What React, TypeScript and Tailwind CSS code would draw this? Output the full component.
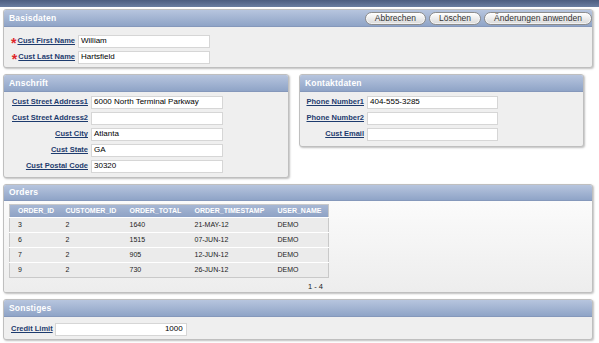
import type { ReactNode } from 'react';

type Field = { label: string; value: string; required?: boolean; align?: 'left' | 'right' };

const FONT = { fontFamily: '"Liberation Sans", Arial, sans-serif' };

function Region({ title, children, className = '', bodyClass = '', actions }: { title: string; children: ReactNode; className?: string; bodyClass?: string; actions?: ReactNode }) {
  return (
    <div className={`flex flex-col border border-[#bfbfbf] rounded-[3px] bg-[#efefef] shadow-[1px_1px_2px_rgba(0,0,0,0.25)] overflow-hidden ${className}`}>
      <div className="flex items-center justify-between h-[17px] pl-[5px] pr-0 bg-gradient-to-b from-[#b7c5de] to-[#8fa4c7] border-b border-[#8598bb]">
        <span className="text-[8.5px] font-bold text-white tracking-[0.2px]">{title}</span>
        {actions}
      </div>
      <div className={`flex-1 ${bodyClass}`}>{children}</div>
    </div>
  );
}

function FieldRows({ fields, labelWidth, inputWidth = 132 }: { fields: Field[]; labelWidth: number; inputWidth?: number }) {
  return (
    <div className="flex flex-col">
      {fields.map((f) => (
        <div key={f.label} className="flex items-center h-[16px]">
          <div className="flex justify-end items-center pr-[3px]" style={{ width: labelWidth }}>
            {f.required && <span className="text-[#e0262b] font-bold text-[14px] leading-none mt-[4px] mr-[1px]">*</span>}
            <span className="text-[7.5px] font-bold text-[#1d3b6e] underline whitespace-nowrap">{f.label}</span>
          </div>
          <div
            className={`h-[13px] bg-white border border-[#d6d6d6] flex items-center px-[2px] text-[8px] text-black ${f.align === 'right' ? 'justify-end' : ''}`}
            style={{ width: inputWidth }}
          >
            {f.value}
          </div>
        </div>
      ))}
    </div>
  );
}

const orders = [
  ['3', '2', '1640', '21-MAY-12', 'DEMO'],
  ['6', '2', '1515', '07-JUN-12', 'DEMO'],
  ['7', '2', '905', '12-JUN-12', 'DEMO'],
  ['9', '2', '730', '26-JUN-12', 'DEMO'],
];
const cols = [
  { name: 'ORDER_ID', w: 48 },
  { name: 'CUSTOMER_ID', w: 64 },
  { name: 'ORDER_TOTAL', w: 65 },
  { name: 'ORDER_TIMESTAMP', w: 83 },
  { name: 'USER_NAME', w: 59 },
];

function PillButton({ children }: { children: ReactNode }) {
  return (
    <button className="h-[13px] px-[9px] rounded-full border border-[#8c8c8c] bg-gradient-to-b from-white to-[#d9d9d9] text-[8.5px] leading-none text-[#333] shadow-[inset_0_0_0_1px_rgba(255,255,255,0.6)]">
      {children}
    </button>
  );
}

export default function App() {
  return (
    <div className="w-[599px] h-[343px] bg-white overflow-hidden" style={FONT}>
      <div className="h-[7px] bg-gradient-to-b from-[#4c5d80] to-[#6b7ea1]" />
      <div className="flex flex-col px-[3px] pt-[2px] gap-[6px] w-[596px]">
        <Region
          title="Basisdaten"
          className="h-[59px]"
          bodyClass="pt-[6px] pl-[8px]"
          actions={
            <div className="flex gap-[3px]">
              <PillButton>Abbrechen</PillButton>
              <PillButton>Löschen</PillButton>
              <PillButton>Änderungen anwenden</PillButton>
            </div>
          }
        >
          <FieldRows
            labelWidth={66}
            inputWidth={132}
            fields={[
              { label: 'Cust First Name', value: 'William', required: true },
              { label: 'Cust Last Name', value: 'Hartsfield', required: true },
            ]}
          />
        </Region>

        <div className="flex items-start gap-[10px]">
          <Region title="Anschrift" className="w-[286px] h-[104px]" bodyClass="pt-[2px] pl-[6px]">
            <FieldRows
              labelWidth={81}
              fields={[
                { label: 'Cust Street Address1', value: '6000 North Terminal Parkway' },
                { label: 'Cust Street Address2', value: '' },
                { label: 'Cust City', value: 'Atlanta' },
                { label: 'Cust State', value: 'GA' },
                { label: 'Cust Postal Code', value: '30320' },
              ]}
            />
          </Region>
          <Region title="Kontaktdaten" className="w-[285px] h-[73px]" bodyClass="pt-[2px] pl-[6px]">
            <FieldRows
              labelWidth={61}
              inputWidth={131}
              fields={[
                { label: 'Phone Number1', value: '404-555-3285' },
                { label: 'Phone Number2', value: '' },
                { label: 'Cust Email', value: '' },
              ]}
            />
          </Region>
        </div>

        <Region title="Orders" className="h-[109px]" bodyClass="bg-gradient-to-b from-[#fbfbfb] to-[#ededed] pt-[3px] pl-[5px]">
          <div className="w-[320px]">
            <table className="border-collapse border border-[#c9c9c9] text-[7px]">
              <thead>
                <tr className="h-[13px] bg-gradient-to-b from-[#a9b9d5] to-[#8ea2c5]">
                  {cols.map((c) => (
                    <th key={c.name} className="text-left font-bold text-white pl-[8px] p-0" style={{ width: c.w }}>
                      {c.name}
                    </th>
                  ))}
                </tr>
              </thead>
              <tbody>
                {orders.map((r) => (
                  <tr key={r[0]} className="h-[15px] bg-[#ebebeb] border-t border-[#d4d4d4]">
                    {r.map((v, i) => (
                      <td key={i} className="pl-[8px] p-0 text-[#222] border-t border-white">
                        {v}
                      </td>
                    ))}
                  </tr>
                ))}
              </tbody>
            </table>
            <div className="text-right pr-[6px] pt-[3px] text-[7.5px] text-[#222]">1 - 4</div>
          </div>
        </Region>

        <Region title="Sonstiges" className="h-[41px]" bodyClass="pt-[4px] pl-[7px]">
          <div className="flex items-center h-[16px]">
            <span className="text-[7.5px] font-bold text-[#1d3b6e] underline pr-[2px]">Credit Limit</span>
            <div className="h-[13px] w-[132px] bg-white border border-[#d6d6d6] flex items-center justify-end px-[3px] text-[8px] text-black">
              1000
            </div>
          </div>
        </Region>
      </div>
    </div>
  );
}
